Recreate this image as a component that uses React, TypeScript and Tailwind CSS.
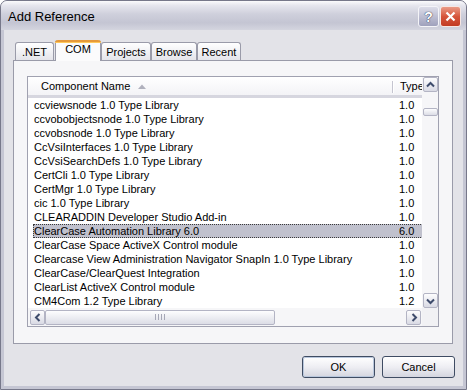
import React from "react";

const rows: [string, string][] = [
  ["ccviewsnode 1.0 Type Library", "1.0"],
  ["ccvobobjectsnode 1.0 Type Library", "1.0"],
  ["ccvobsnode 1.0 Type Library", "1.0"],
  ["CcVsiInterfaces 1.0 Type Library", "1.0"],
  ["CcVsiSearchDefs 1.0 Type Library", "1.0"],
  ["CertCli 1.0 Type Library", "1.0"],
  ["CertMgr 1.0 Type Library", "1.0"],
  ["cic 1.0 Type Library", "1.0"],
  ["CLEARADDIN Developer Studio Add-in", "1.0"],
  ["ClearCase Automation Library 6.0", "6.0"],
  ["ClearCase Space ActiveX Control module", "1.0"],
  ["Clearcase View Administration Navigator SnapIn 1.0 Type Library", "1.0"],
  ["ClearCase/ClearQuest Integration", "1.0"],
  ["ClearList ActiveX Control module", "1.0"],
  ["CM4Com 1.2 Type Library", "1.2"],
];

function Chevron({ dir }: { dir: "up" | "down" | "left" | "right" }) {
  const d =
    dir === "up"
      ? "M1 5.5 L4.5 2 L8 5.5"
      : dir === "down"
      ? "M1 2.5 L4.5 6 L8 2.5"
      : dir === "left"
      ? "M5.5 1 L2 4.5 L5.5 8"
      : "M2.5 1 L6 4.5 L2.5 8";
  const w = dir === "up" || dir === "down" ? 9 : 8;
  const h = dir === "up" || dir === "down" ? 8 : 9;
  return (
    <svg width={w} height={h} viewBox={`0 0 ${w} ${h}`}>
      <path d={d} fill="none" stroke="#3e4c6c" strokeWidth="2" />
    </svg>
  );
}

function ScrollBtn({ dir }: { dir: "up" | "down" | "left" | "right" }) {
  return (
    <div className="w-[15px] h-[15px] rounded-[2px] border border-[#b3b4c4] bg-gradient-to-b from-[#fdfdfe] to-[#d9dae4] flex items-center justify-center">
      <Chevron dir={dir} />
    </div>
  );
}

function Tab({ label, w, selected }: { label: string; w: number; selected?: boolean }) {
  if (selected) {
    return (
      <div
        className="relative h-[21px] -mb-px border-x border-[#9a9ba9] bg-[#fbfbfc] flex items-start justify-center pt-[3px] rounded-t-[3px]"
        style={{ width: w }}
      >
        <div className="absolute -left-px -right-px top-0 h-[3px] rounded-t-[3px] bg-[#e69a3a] border-b border-[#ffc85a]" />
        <span className="mt-[1px]">{label}</span>
      </div>
    );
  }
  return (
    <div
      className="h-[18px] border-x border-t border-[#9a9ba9] rounded-t-[3px] bg-gradient-to-b from-[#ffffff] to-[#e4e4ea] flex items-center justify-center"
      style={{ width: w }}
    >
      <span className="mt-[2px]">{label}</span>
    </div>
  );
}

function Btn({ label, def }: { label: string; def?: boolean }) {
  return (
    <div className="w-[73px] h-[22px] rounded-[3px] border border-[#3f4c63] bg-gradient-to-b from-[#ffffff] via-[#eeeef3] to-[#d4d5df] flex items-center justify-center">
      <div
        className={
          "w-full h-full rounded-[2px] flex items-center justify-center " +
          (def ? "border border-[#b9c7dc]" : "")
        }
      >
        {label}
      </div>
    </div>
  );
}

export default function App() {
  return (
    <div className="w-[467px] h-[390px] bg-white font-['Liberation_Sans',Arial,sans-serif] text-[11px] text-black leading-none">
      <div className="w-full h-full flex flex-col rounded-t-[7px] border border-[#77788a] bg-[#c5c6d3] overflow-hidden">
        {/* Title bar */}
        <div className="h-[29px] shrink-0 flex items-center pl-[7px] pr-[5px] bg-[linear-gradient(to_bottom,#fbfbfc_0%,#e6e6ee_15%,#cfd0dc_45%,#c4c5d3_75%,#d4d5df_100%)]">
          <span className="text-[13px] text-black mt-[2px] flex-1">Add Reference</span>
          <div className="w-[21px] h-[21px] mt-[2px] rounded-[3px] border border-[#f4f4f8] bg-gradient-to-b from-[#dcdce8] to-[#9fa1bc] flex items-center justify-center text-[14px] font-bold text-white [text-shadow:0_0_1px_#2b3048,0_0_1px_#2b3048]">
            ?
          </div>
          <div className="w-[21px] h-[21px] ml-[1px] mt-[2px] rounded-[3px] border border-[#f6e6e2] bg-gradient-to-b from-[#e99a86] via-[#d6553b] to-[#c23a22] flex items-center justify-center">
            <svg width="11" height="11" viewBox="0 0 11 11">
              <path d="M1.5 1.5 L9.5 9.5 M9.5 1.5 L1.5 9.5" stroke="#ffffff" strokeWidth="2.2" />
            </svg>
          </div>
        </div>

        {/* Client area */}
        <div className="flex-1 mx-[3px] mb-[3px] bg-[#e3e3e8] flex flex-col pt-[10px] pl-[9px] pr-[10px]">
          {/* Tab strip */}
          <div className="relative z-10 h-[20px] flex items-end pl-[2px]">
            <div className="mr-[1px]">
              <Tab label=".NET" w={39} />
            </div>
            <Tab label="COM" w={46} selected />
            <Tab label="Projects" w={50} />
            <Tab label="Browse" w={46} />
            <Tab label="Recent" w={44} />
          </div>

          {/* Panel */}
          <div className="h-[284px] border border-[#9a9ba9] bg-[#f6f6f8] pt-[15px] pl-[13px]">
            <div className="w-[412px] h-[251px] border border-[#a0a1b0] bg-white flex">
              {/* left column */}
              <div className="w-[394px] flex flex-col overflow-hidden">
                {/* header */}
                <div className="h-[21px] shrink-0 relative bg-gradient-to-b from-[#ffffff] to-[#f3f3f6] border-b-[3px] border-[#d6d6df] flex items-center">
                  <div className="w-[364px] shrink-0 flex items-center pl-[13px]">
                    <span>Component Name</span>
                    <svg className="ml-[8px]" width="8" height="5" viewBox="0 0 8 5">
                      <path d="M0 5 L4 0.5 L8 5 Z" fill="#b0b1bd" />
                    </svg>
                  </div>
                  <div className="absolute left-[364px] top-[4px] h-[12px] w-[2px] border-l border-[#c5c5d0] bg-white" />
                  <span className="pl-[8px] whitespace-nowrap">Type</span>
                </div>
                {/* rows */}
                <div className="flex flex-col">
                  {rows.map(([name, ver], i) => {
                    const sel = i === 9;
                    return (
                      <div
                        key={i}
                        className={
                          "h-[14px] ml-[5px] w-[420px] shrink-0 flex items-center whitespace-nowrap " +
                          (sel ? "bg-[#c0c1cd] outline outline-1 outline-dotted outline-[#3a3a3a] -outline-offset-1" : "")
                        }
                      >
                        <span className="w-[366px] shrink-0 pl-[1px]">{name}</span>
                        <span>{ver}</span>
                      </div>
                    );
                  })}
                </div>
                <div className="flex-1" />
                {/* horizontal scrollbar */}
                <div className="h-[18px] shrink-0 bg-[#f6f6f8] flex items-center pl-[2px] pr-[1px]">
                  <ScrollBtn dir="left" />
                  <div className="flex-1 h-[15px] flex">
                    <div className="w-[230px] h-[15px] rounded-[2px] border border-[#b3b4c4] bg-gradient-to-b from-[#fdfdfe] to-[#dcdde6] flex items-center justify-center gap-[2px]">
                      <div className="w-px h-[6px] bg-[#a6a7b6]" />
                      <div className="w-px h-[6px] bg-[#a6a7b6]" />
                      <div className="w-px h-[6px] bg-[#a6a7b6]" />
                      <div className="w-px h-[6px] bg-[#a6a7b6]" />
                    </div>
                  </div>
                  <ScrollBtn dir="right" />
                </div>
              </div>
              {/* vertical scrollbar */}
              <div className="w-[16px] flex flex-col">
                <div className="h-[231px] bg-[#f6f6f8] flex flex-col items-center">
                  <ScrollBtn dir="up" />
                  <div className="flex-1 w-full flex flex-col items-center pt-[16px]">
                    <div className="w-[15px] h-[8px] rounded-[2px] border border-[#b3b4c4] bg-gradient-to-b from-[#fdfdfe] to-[#dcdde6]" />
                  </div>
                  <ScrollBtn dir="down" />
                </div>
                <div className="flex-1 bg-[#f1f1f4]" />
              </div>
            </div>
          </div>

          {/* Buttons */}
          <div className="mt-[12px] -mr-[2px] flex justify-end gap-[7px]">
            <Btn label="OK" def />
            <Btn label="Cancel" />
          </div>
        </div>
      </div>
    </div>
  );
}
